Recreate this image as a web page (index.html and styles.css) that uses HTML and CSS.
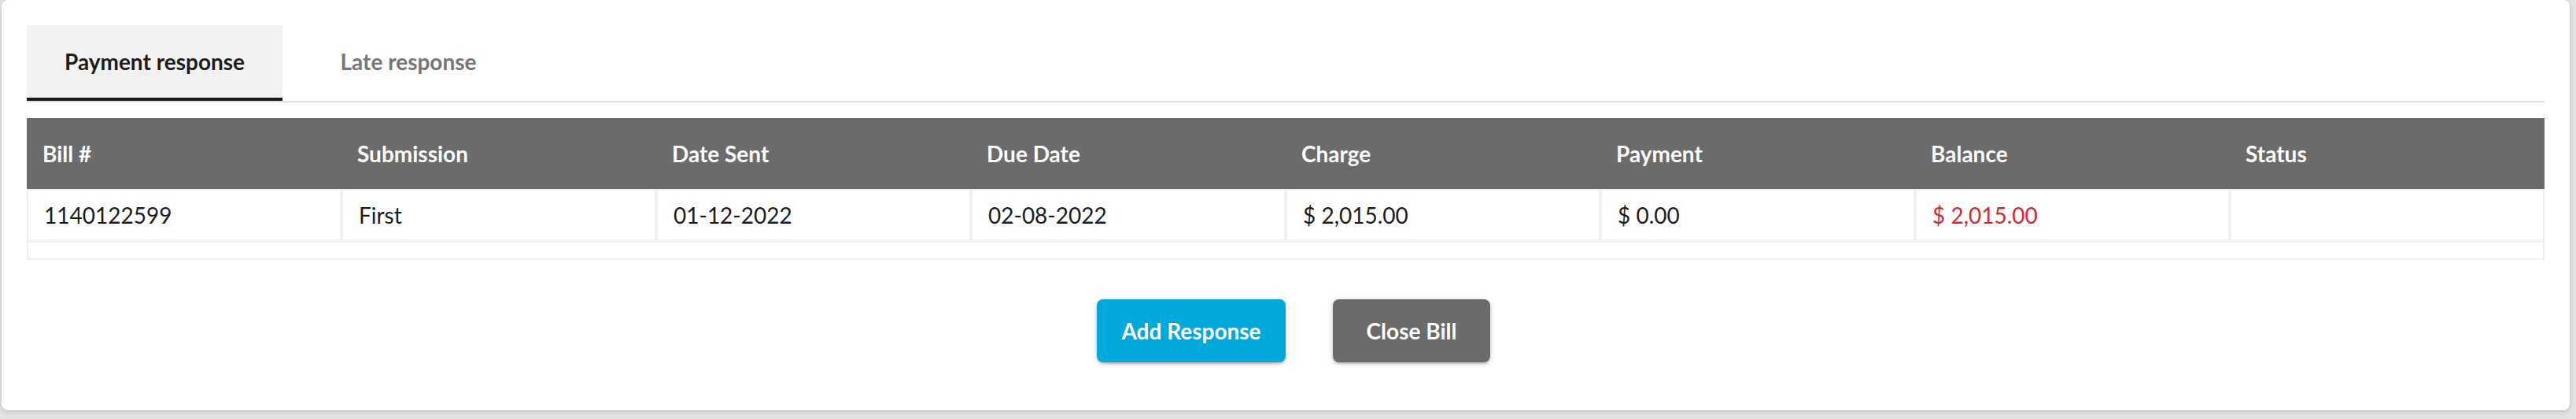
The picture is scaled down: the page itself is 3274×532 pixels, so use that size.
FILE: index.html
```html
<!DOCTYPE html>
<html lang="en">
<head>
<meta charset="utf-8">
<title>Bill responses</title>
<link rel="stylesheet" href="styles.css">
</head>
<body>
<div class="card">
  <div class="tabs">
    <div class="tab tab-active">Payment response</div>
    <div class="tab">Late response</div>
  </div>
  <table class="bill-table">
    <thead>
      <tr>
        <th>Bill #</th>
        <th>Submission</th>
        <th>Date Sent</th>
        <th>Due Date</th>
        <th>Charge</th>
        <th>Payment</th>
        <th>Balance</th>
        <th>Status</th>
      </tr>
    </thead>
    <tbody>
      <tr class="data-row">
        <td>1140122599</td>
        <td>First</td>
        <td>01-12-2022</td>
        <td>02-08-2022</td>
        <td>$ 2,015.00</td>
        <td>$ 0.00</td>
        <td class="negative">$ 2,015.00</td>
        <td></td>
      </tr>
      <tr class="empty-row">
        <td colspan="8"></td>
      </tr>
    </tbody>
  </table>
  <div class="actions">
    <button class="btn btn-primary">Add Response</button>
    <button class="btn btn-secondary">Close Bill</button>
  </div>
</div>
</body>
</html>
```

FILE: styles.css
```css
html, body {
  margin: 0;
  padding: 0;
}

body {
  background: #e3e3e3;
  font-family: Lato, "Open Sans", Arial, sans-serif;
  font-size: 28px;
  color: #1c1c1c;
  height: 532px;
  overflow: hidden;
}

.card {
  margin: 0 8px 0 2px;
  background: #ffffff;
  border-radius: 8px;
  box-shadow: 0 2px 6px rgba(0, 0, 0, 0.14), 0 1px 2px rgba(0, 0, 0, 0.06);
  padding: 32px 32px 61px 32px;
  box-sizing: border-box;
  height: 521px;
}

.tabs {
  display: flex;
  border-bottom: 2px solid #e2e2e2;
  margin-bottom: 20px;
}

.tab {
  min-width: 320px;
  height: 96px;
  box-sizing: border-box;
  display: flex;
  align-items: center;
  justify-content: center;
  padding: 0 48px 4px 48px;
  font-weight: 700;
  font-size: 28px;
  color: #767676;
  letter-spacing: 0;
}

.tab-active {
  background: #f2f2f2;
  color: #1c1c1c;
  border-bottom: 4px solid #1a1a1a;
  padding-bottom: 0;
}

.bill-table {
  width: 3200px;
  table-layout: fixed;
  border-collapse: separate;
  border-spacing: 0;
}

.bill-table th {
  background: #6b6b6b;
  color: #ffffff;
  font-weight: 700;
  font-size: 28px;
  text-align: left;
  height: 90px;
  padding: 0 20px;
  box-sizing: border-box;
}

.bill-table td {
  border: 2px solid #efefef;
  padding: 0 20px;
  font-size: 28px;
  color: #1c1c1c;
}

.data-row td {
  height: 66px;
  box-sizing: border-box;
}

.empty-row td {
  height: 24px;
  padding: 0;
  box-sizing: border-box;
}

.bill-table td.negative {
  color: #d42a2f;
}

.actions {
  display: flex;
  justify-content: center;
  gap: 60px;
  margin-top: 50px;
  padding-left: 20px;
}

.btn {
  font-family: Lato, "Open Sans", Arial, sans-serif;
  font-weight: 700;
  font-size: 28px;
  color: #ffffff;
  border: none;
  border-radius: 8px;
  height: 80px;
  min-width: 200px;
  padding: 0 31px;
  box-shadow: 0 3px 3px -2px rgba(0, 0, 0, 0.2), 0 2px 4px 0 rgba(0, 0, 0, 0.14), 0 1px 8px 0 rgba(0, 0, 0, 0.12);
  cursor: pointer;
}

.btn-primary {
  background: #00a9db;
  width: 240px;
}

.btn-secondary {
  background: #6b6b6b;
}
```
